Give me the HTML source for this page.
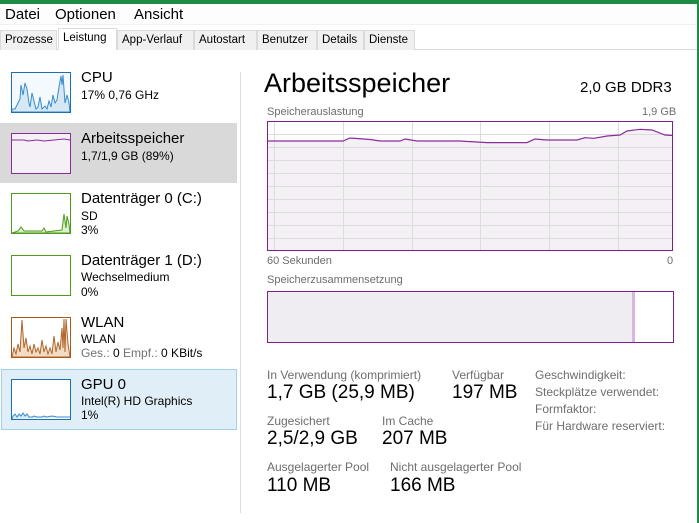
<!DOCTYPE html>
<html><head><meta charset="utf-8"><style>
*{margin:0;padding:0;box-sizing:border-box}
body{width:699px;height:523px;background:#fff;font-family:"Liberation Sans",sans-serif;position:relative;overflow:hidden;color:#000}
.a{position:absolute;white-space:nowrap}
.tab{position:absolute;top:30px;height:20px;font-size:11.5px;border:1px solid #dadada;border-bottom:none;background:#f0f0f0;padding:3px 0 0 4px;color:#000}
.g{color:#707070}
.thumb{position:absolute;left:11px;width:60px;height:41px;border:1px solid}
.t1{font-size:15px}
.t2{font-size:12px}
.lbl{font-size:11px;color:#6d6d6d}
.val{font-size:19px}
</style></head><body>
<div class="a" style="left:0;top:0;width:699px;height:4px;background:#1e8a43"></div>
<div class="a" style="left:697px;top:0;width:2px;height:523px;background:#1e8a43"></div>
<div class="a" style="left:0;top:4px;width:697px;height:21px;background:#fdfdfd;border-bottom:1px solid #f0f0f0"></div>
<div class="a" style="left:5px;top:6px;font-size:15px">Datei</div>
<div class="a" style="left:55px;top:6px;font-size:15px">Optionen</div>
<div class="a" style="left:134px;top:6px;font-size:15px">Ansicht</div>
<div class="a" style="left:0;top:49px;width:697px;height:1px;background:#d9d9d9"></div>
<div class="tab" style="left:0;width:57px">Prozesse</div>
<div class="tab" style="left:58px;width:59px;top:28px;height:22px;background:#fff;padding-top:3px">Leistung</div>
<div class="tab" style="left:117px;width:77px">App-Verlauf</div>
<div class="tab" style="left:194px;width:63px">Autostart</div>
<div class="tab" style="left:257px;width:60px">Benutzer</div>
<div class="tab" style="left:317px;width:47px">Details</div>
<div class="tab" style="left:364px;width:51px">Dienste</div>

<div class="a" style="left:240px;top:72px;width:1px;height:441px;background:#dedede"></div>

<div class="thumb" style="top:72px;border-color:#1c6fb3;background:#f4f9fd">
<svg width="58" height="39" viewBox="0 0 58 39"><path d="M0 39 L0 36 L3 36 L6 30 L8 26 L9 12 L11 22 L13 10 L15 16 L17 30 L18 34 L20 20 L22 28 L24 36 L26 34 L28 24 L30 36 L33 33 L35 36 L37 28 L39 34 L41 22 L43 30 L45 27 L47 14 L49 3 L50 12 L51 2 L53 30 L55 22 L57 30 L58 39Z" fill="#d6e8f5" stroke="#3a8ccc" stroke-width="1"/></svg></div>
<div class="a t1" style="left:81px;top:69px">CPU</div>
<div class="a t2" style="left:81px;top:88px">17% 0,76 GHz</div>

<div class="a" style="left:0;top:123px;width:237px;height:60px;background:#d9d9d9"></div>
<div class="thumb" style="top:133px;border-color:#8b2a9b;background:#f4f0f6">
<svg width="58" height="39" viewBox="0 0 58 39"><path d="M0 6 L12 6 L16 7 L25 6 L32 7 L42 6 L52 5 L58 6" fill="none" stroke="#8b2a9b"/></svg></div>
<div class="a t1" style="left:81px;top:130px">Arbeitsspeicher</div>
<div class="a t2" style="left:81px;top:149px">1,7/1,9 GB (89%)</div>

<div class="thumb" style="top:193px;border-color:#4e9a1c">
<svg width="58" height="39" viewBox="0 0 58 39"><path d="M0 39 L6 37 L9 33 L12 37 L30 37 L32 34 L34 38 L50 36 L52 20 L54 34 L55 22 L57 30 L58 39Z" fill="#dcefcf" stroke="#4e9a1c"/></svg></div>
<div class="a t1" style="left:81px;top:190px">Datenträger 0 (C:)</div>
<div class="a t2" style="left:81px;top:209px">SD</div>
<div class="a t2" style="left:81px;top:223px">3%</div>

<div class="thumb" style="top:255px;border-color:#4e9a1c"></div>
<div class="a t1" style="left:81px;top:252px">Datenträger 1 (D:)</div>
<div class="a t2" style="left:81px;top:270px">Wechselmedium</div>
<div class="a t2" style="left:81px;top:285px">0%</div>

<div class="thumb" style="top:317px;border-color:#a95a18">
<svg width="58" height="39" viewBox="0 0 58 39"><path d="M0 39 L2 30 L4 36 L6 26 L8 34 L10 2 L12 30 L14 20 L16 34 L18 28 L20 36 L22 26 L24 34 L26 30 L28 36 L30 22 L32 34 L34 28 L36 36 L38 30 L40 36 L42 18 L44 34 L46 24 L48 32 L50 10 L51 30 L52 1 L53 34 L54 1 L56 26 L58 39Z" fill="#f3dcc6" stroke="#b0652a"/></svg></div>
<div class="a t1" style="left:81px;top:314px">WLAN</div>
<div class="a t2" style="left:81px;top:332px">WLAN</div>
<div class="a t2" style="left:81px;top:346px"><span class="g">Ges.:</span> 0 <span class="g">Empf.:</span> 0 KBit/s</div>

<div class="a" style="left:1px;top:369px;width:236px;height:61px;background:#e0eef8;border:1px solid #a2cfe9"></div>
<div class="thumb" style="top:379px;border-color:#1c6fb3;background:#fff">
<svg width="58" height="39" viewBox="0 0 58 39"><path d="M0 39 L1 36 L3 34 L5 37 L7 34 L9 36 L11 33 L13 36 L15 34 L17 37 L20 37 L22 36 L25 37 L30 37 L32 36 L34 37 L40 36 L45 37 L58 37" fill="#d6e8f5" stroke="#3a8ccc"/></svg></div>
<div class="a t1" style="left:81px;top:376px">GPU 0</div>
<div class="a t2" style="left:81px;top:394px">Intel(R) HD Graphics</div>
<div class="a t2" style="left:81px;top:408px">1%</div>

<div class="a" style="left:264px;top:68px;font-size:27px">Arbeitsspeicher</div>
<div class="a" style="left:580px;top:79px;font-size:15px">2,0 GB DDR3</div>
<div class="a lbl" style="left:267px;top:106px">Speicherauslastung</div>
<div class="a lbl" style="left:642px;top:106px">1,9 GB</div>
<svg class="a" style="left:266px;top:120px" width="408" height="132" viewBox="0 0 408 132">
<rect x="1" y="1" width="406" height="130" fill="#fff"/>
<path d="M1 21 L77 21 L84 18 L104 19.5 L114 21 L134 21 L139 19 L151 21 L194 21 L221 22.6 L261 22.6 L269 19 L281 20 L311 20 L319 17.7 L328 18.3 L341 16 L354 15 L361 11 L374 9.3 L386 10 L399 15 L407 15.5 L407 131 L1 131Z" fill="#f4f0f6"/>
<g stroke="#dcdcdc" stroke-width="1">
<path d="M1 14.5H407M1 27.5H407M1 40.5H407M1 53.5H407M1 66.5H407M1 79.5H407M1 92.5H407M1 105.5H407M1 118.5H407"/>
<path d="M8.5 1V131M77.5 1V131M146.5 1V131M214.5 1V131M283.5 1V131M352.5 1V131"/>
</g>
<path d="M1 21 L77 21 L84 18 L104 19.5 L114 21 L134 21 L139 19 L151 21 L194 21 L221 22.6 L261 22.6 L269 19 L281 20 L311 20 L319 17.7 L328 18.3 L341 16 L354 15 L361 11 L374 9.3 L386 10 L399 15 L407 15.5" fill="none" stroke="#8b2a9b" stroke-width="1.2"/>
<rect x="1.5" y="1.5" width="405" height="129" fill="none" stroke="#7b1f8e" stroke-width="1"/>
</svg>
<div class="a lbl" style="left:267px;top:255px">60 Sekunden</div>
<div class="a lbl" style="left:667px;top:255px">0</div>
<div class="a lbl" style="left:267px;top:274px">Speicherzusammensetzung</div>
<div class="a" style="left:267px;top:291px;width:407px;height:52px;border:1px solid #7b1f8e;background:#fff"></div>
<div class="a" style="left:268px;top:292px;width:365px;height:50px;background:#f0edf2"></div>
<div class="a" style="left:632px;top:292px;width:3px;height:50px;background:#d7b7df"></div>

<div class="a lbl" style="left:267px;top:368px;font-size:12px">In Verwendung (komprimiert)</div>
<div class="a val" style="left:267px;top:382px">1,7 GB (25,9 MB)</div>
<div class="a lbl" style="left:452px;top:368px;font-size:12px">Verfügbar</div>
<div class="a val" style="left:452px;top:382px">197 MB</div>
<div class="a lbl" style="left:535px;top:368px;font-size:12px">Geschwindigkeit:</div>
<div class="a lbl" style="left:535px;top:385px;font-size:12px">Steckplätze verwendet:</div>
<div class="a lbl" style="left:535px;top:402px;font-size:12px">Formfaktor:</div>
<div class="a lbl" style="left:535px;top:419px;font-size:12px">Für Hardware reserviert:</div>
<div class="a lbl" style="left:267px;top:414px;font-size:12px">Zugesichert</div>
<div class="a val" style="left:267px;top:428px">2,5/2,9 GB</div>
<div class="a lbl" style="left:382px;top:414px;font-size:12px">Im Cache</div>
<div class="a val" style="left:382px;top:428px">207 MB</div>
<div class="a lbl" style="left:267px;top:460px;font-size:12px">Ausgelagerter Pool</div>
<div class="a val" style="left:267px;top:475px">110 MB</div>
<div class="a lbl" style="left:390px;top:460px;font-size:12px">Nicht ausgelagerter Pool</div>
<div class="a val" style="left:390px;top:475px">166 MB</div>
</body></html>
